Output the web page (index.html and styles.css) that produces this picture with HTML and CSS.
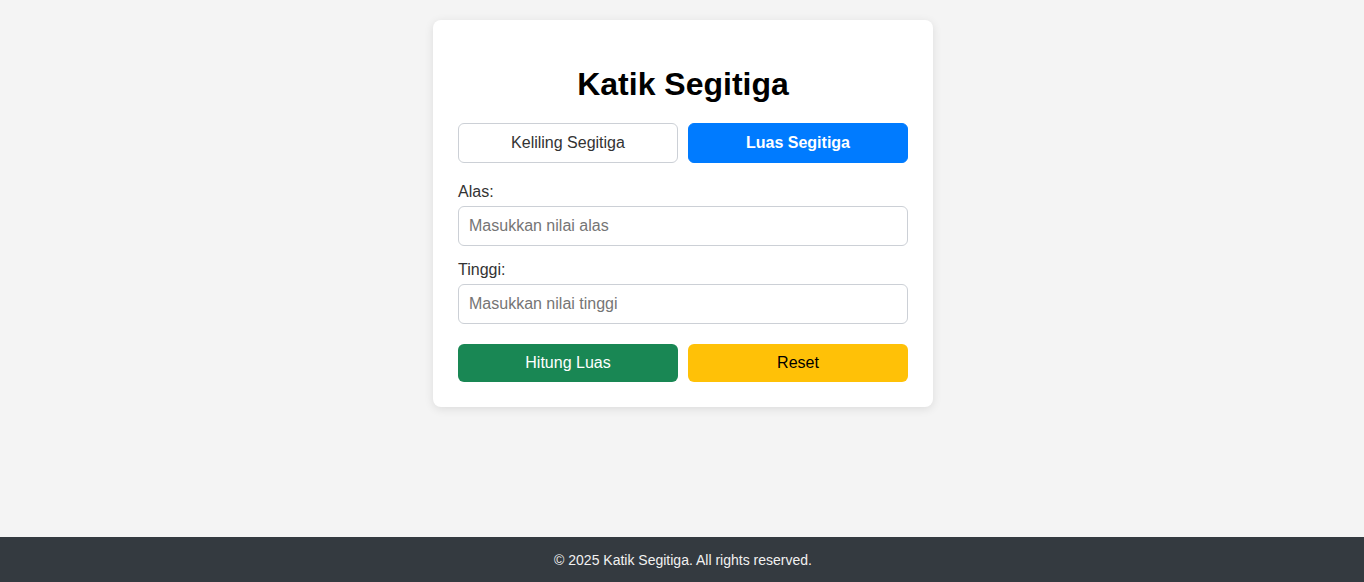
FILE: index.html
```html
<!DOCTYPE html>
<html lang="id">
<head>
<meta charset="utf-8">
<title>Katik Segitiga</title>
<link rel="stylesheet" href="styles.css">
</head>
<body>
<main class="main">
  <div class="card">
    <h1 class="title">Katik Segitiga</h1>
    <div class="tabs">
      <button class="tab">Keliling Segitiga</button>
      <button class="tab tab-active">Luas Segitiga</button>
    </div>
    <form class="form">
      <label class="label" for="alas">Alas:</label>
      <input class="input" id="alas" type="text" placeholder="Masukkan nilai alas">
      <label class="label" for="tinggi">Tinggi:</label>
      <input class="input" id="tinggi" type="text" placeholder="Masukkan nilai tinggi">
      <div class="actions">
        <button type="button" class="btn btn-green">Hitung Luas</button>
        <button type="button" class="btn btn-yellow">Reset</button>
      </div>
    </form>
  </div>
</main>
<footer class="footer">© 2025 Katik Segitiga. All rights reserved.</footer>
</body>
</html>
```
FILE: styles.css
```css
* { box-sizing: border-box; }
html, body { margin: 0; padding: 0; }
body {
  font-family: "Liberation Sans", Arial, sans-serif;
  background: #f4f4f4;
  color: #333;
  min-height: 100vh;
  display: flex;
  flex-direction: column;
}
.main {
  flex: 1;
  display: flex;
  justify-content: center;
  align-items: flex-start;
  padding: 20px 0 0 2px;
}
.card {
  width: 500px;
  background: #fff;
  border-radius: 8px;
  box-shadow: 0 2px 10px rgba(0,0,0,0.1);
  padding: 25px;
}
.title {
  margin: 21px 0 20px;
  font-size: 32px;
  line-height: 37px;
  font-weight: bold;
  color: #000;
  text-align: center;
}
.tabs {
  display: flex;
  gap: 10px;
}
.tab {
  flex: 1;
  height: 40px;
  border: 1px solid #ccd0d6;
  border-radius: 6px;
  background: #fff;
  color: #333;
  font-family: inherit;
  font-size: 16px;
}
.tab-active {
  background: #007bff;
  border-color: #007bff;
  color: #fff;
  font-weight: bold;
}
.form {
  display: flex;
  flex-direction: column;
  margin-top: 20px;
}
.label {
  font-size: 16px;
  line-height: 18px;
  color: #333;
  margin-bottom: 5px;
}
.input {
  height: 40px;
  border: 1px solid #ccd0d6;
  border-radius: 6px;
  padding: 0 10px;
  font-family: inherit;
  font-size: 16px;
  margin-bottom: 15px;
}
.input::placeholder { color: #757575; }
.actions {
  display: flex;
  gap: 10px;
  margin-top: 5px;
}
.btn {
  flex: 1;
  height: 38px;
  border: none;
  border-radius: 6px;
  font-family: inherit;
  font-size: 16px;
}
.btn-green { background: #198754; color: #fff; }
.btn-yellow { background: #ffc107; color: #000; }
.footer {
  height: 45px;
  background: #343a40;
  color: #f1f1f1;
  font-size: 14px;
  display: flex;
  align-items: center;
  justify-content: center;
  padding-left: 2px;
}
```
